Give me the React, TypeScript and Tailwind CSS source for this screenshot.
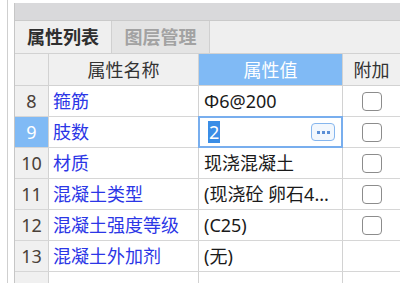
import React from "react";

const rows = [
  { n: "8", name: "箍筋", value: "Φ6@200", check: true },
  { n: "9", name: "肢数", value: "2", check: true, edit: true },
  { n: "10", name: "材质", value: "现浇混凝土", check: true },
  { n: "11", name: "混凝土类型", value: "(现浇砼 卵石4...", check: true },
  { n: "12", name: "混凝土强度等级", value: "(C25)", check: true },
  { n: "13", name: "混凝土外加剂", value: "(无)", check: false },
  { n: "", name: "", value: "", check: false },
];

function Checkbox() {
  return <div className="w-[20px] h-[19px] rounded-[4px] border-[1.5px] border-[#8c8c8c] bg-white" />;
}

export default function App() {
  return (
    <div
      className="w-[400px] h-[283px] bg-white flex overflow-hidden text-[18px] leading-[22px]"
      style={{ fontFamily: '"Noto Sans", "Noto Sans CJK SC", sans-serif' }}
    >
      <div className="w-[14px] h-full flex shrink-0">
        <div className="w-[8px] h-full border-r border-[#cfcfcf]" />
      </div>
      <div className="flex-1 mt-[3px] flex flex-col border-l border-[#c6c6c6] min-w-0">
        <div className="h-[18px] bg-[#d9d9db] border-b border-[#cacaca] shrink-0" />
        <div className="h-[33px] bg-[#efefef] border-b border-[#d2d2d2] flex shrink-0">
          <div className="w-[97px] flex items-center justify-center font-bold text-[#2e2e2e] border-r border-[#d0d0d0]">
            属性列表
          </div>
          <div className="w-[98px] bg-[#e4e4e4] flex items-center justify-center font-bold text-[#a2a2a2] border-r border-[#d0d0d0]">
            图层管理
          </div>
          <div className="flex-1" />
        </div>
        <div className="flex h-[32px] shrink-0 border-b border-[#d2d2d2] bg-[#f0f0f0]">
          <div className="w-[34px] border-r border-[#d2d2d2]" />
          <div className="w-[150px] border-r border-[#d2d2d2] flex items-center justify-center text-[#333]">
            属性名称
          </div>
          <div className="w-[144px] bg-[#80baf5] border-r border-[#d2d2d2] flex items-center justify-center text-white">
            属性值
          </div>
          <div className="flex-1 flex items-center justify-center text-[#333]">附加</div>
        </div>
        {rows.map((r, i) => (
          <div key={i} className="flex h-[31px] shrink-0 border-b border-[#d6d6d6]">
            <div
              className={
                r.edit
                  ? "w-[34px] border-r border-[#d2d2d2] bg-[#80baf5] text-white flex items-center justify-center"
                  : "w-[34px] border-r border-[#d2d2d2] bg-[#f0f0f0] text-[#4a4038] flex items-center justify-center"
              }
            >
              {r.n}
            </div>
            <div className="w-[150px] border-r border-[#d2d2d2] flex items-center pl-[4px] text-[#2b36e6] whitespace-nowrap overflow-hidden">
              {r.name}
            </div>
            {r.edit ? (
              <div className="w-[144px] border-r border-[#d2d2d2] relative">
                <div className="absolute left-[-1px] top-[-1px] right-[-1px] bottom-[-1px] border-2 border-[#78aeee] flex items-center pl-[8px] pr-[6px]">
                  <span className="bg-[#3a8de6] text-white px-[1px]">2</span>
                  <div className="flex-1" />
                  <div className="w-[24px] h-[18px] rounded-[4px] border border-[#86b6ee] bg-[#f2f7fd] flex items-center justify-center gap-[2px]">
                    <div className="w-[3px] h-[3px] bg-[#5b8fd6]" />
                    <div className="w-[3px] h-[3px] bg-[#5b8fd6]" />
                    <div className="w-[3px] h-[3px] bg-[#5b8fd6]" />
                  </div>
                </div>
              </div>
            ) : (
              <div className="w-[144px] border-r border-[#d2d2d2] flex items-center pl-[5px] pr-[3px] text-[#1a1a1a] min-w-0 whitespace-nowrap">
                {r.value}
              </div>
            )}
            <div className="flex-1 flex items-center justify-center">{r.check ? <Checkbox /> : null}</div>
          </div>
        ))}
      </div>
    </div>
  );
}
